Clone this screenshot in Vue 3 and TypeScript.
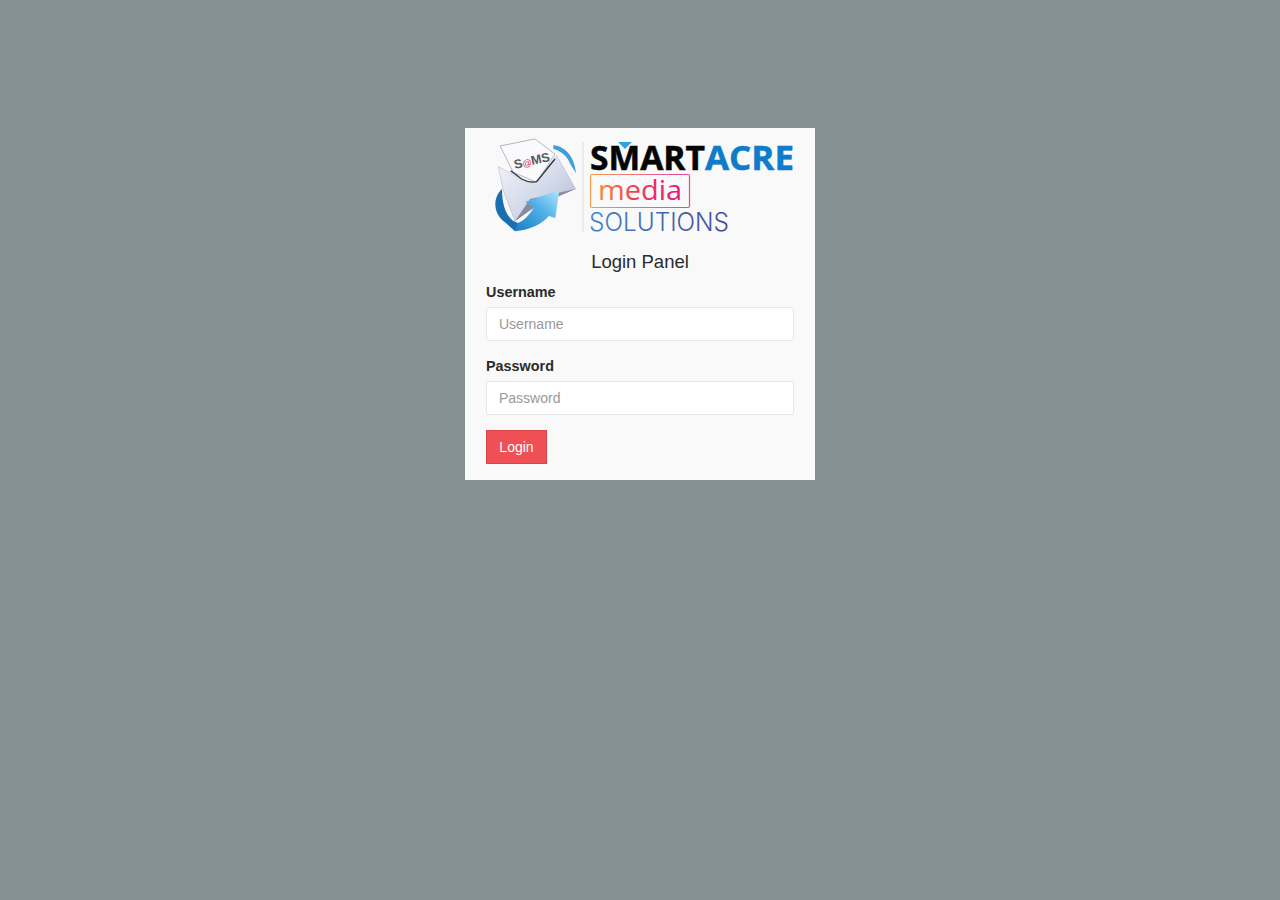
<script setup lang="ts">
import { ref } from 'vue'

const username = ref<string>('')
const password = ref<string>('')
</script>

<template>
  <main class="panel">
    <svg class="logo" viewBox="0 0 308 104" width="308" height="104" role="img" aria-label="SmartAcre Media Solutions">
      <defs>
        <linearGradient id="mediaGrad" x1="0" x2="1" y1="0" y2="0">
          <stop offset="0" stop-color="#f58a3c" />
          <stop offset="0.45" stop-color="#ee3d57" />
          <stop offset="1" stop-color="#e9127f" />
        </linearGradient>
        <linearGradient id="boxGrad" x1="0" x2="1" y1="0" y2="0">
          <stop offset="0" stop-color="#f59a52" />
          <stop offset="1" stop-color="#ef3fa0" />
        </linearGradient>
        <linearGradient id="solGrad" x1="0" x2="1" y1="0" y2="0">
          <stop offset="0" stop-color="#3f86c8" />
          <stop offset="1" stop-color="#434a97" />
        </linearGradient>
        <linearGradient id="envGrad" x1="0" x2="1" y1="0" y2="1">
          <stop offset="0" stop-color="#f4f5fa" />
          <stop offset="0.55" stop-color="#d3d9e8" />
          <stop offset="1" stop-color="#aab4cd" />
        </linearGradient>
        <linearGradient id="arrowGrad" x1="0" x2="1" y1="1" y2="0">
          <stop offset="0" stop-color="#1c7cc0" />
          <stop offset="0.55" stop-color="#4eb0e8" />
          <stop offset="1" stop-color="#b4e6fb" />
        </linearGradient>
      </defs>

      <g transform="translate(0 -2) scale(0.3333)">
        <path d="M190 33 C228 38 254 70 258 118 L242 92 C232 66 212 50 190 45 Z" fill="#3f9fd8" />
        <path d="M30 36 L135 15 L195 60 L140 145 L70 115 Z" fill="#fafafc" stroke="#8f95a6" stroke-width="2" />
        <text x="75" y="105" transform="rotate(-13 75 105)" class="sams">S<tspan fill="#e0405a" font-size="28">@</tspan>MS</text>
        <path d="M25 98 L70 122 Q105 150 135 145 L200 65 L257 165 L130 205 L75 262 L40 170 Z" fill="url(#envGrad)" stroke="#a6aec4" stroke-width="1.5" />
        <path d="M62 110 L95 135 Q120 148 140 143 L195 75" fill="none" stroke="#2f3440" stroke-width="4" />
        <path d="M75 262 L120 195 L257 165 L140 215 Z" fill="#858ca1" />
        <path d="M36 165 C8 190 8 240 45 265 L75 292 L88 268 C56 262 36 225 36 165 Z" fill="#1a6fb0" />
        <path d="M75 292 C120 288 160 268 176 246 L196 252 L208 168 L106 204 L132 220 C118 244 100 262 82 268 Z" fill="url(#arrowGrad)" />
      </g>

      <line x1="93" y1="6" x2="93" y2="96" stroke="#dcdcdc" stroke-width="1" />

      <text x="100" y="34" class="smart" textLength="115" lengthAdjust="spacingAndGlyphs">SMART</text>
      <path d="M128 6 L142 6 L135 13 Z" fill="#2ba3dc" />
      <text x="215" y="34" class="acre" textLength="89" lengthAdjust="spacingAndGlyphs">ACRE</text>

      <rect x="100.5" y="38.5" width="99" height="33" rx="1.5" fill="none" stroke="url(#boxGrad)" stroke-width="1.2" />
      <text x="108" y="64" class="media" fill="url(#mediaGrad)" textLength="84" lengthAdjust="spacingAndGlyphs">media</text>

      <text x="99" y="95" class="solutions" fill="url(#solGrad)" textLength="140" lengthAdjust="spacingAndGlyphs">SOLUTIONS</text>
    </svg>

    <h1 class="title">Login Panel</h1>

    <form class="form" @submit.prevent>
      <div class="field">
        <label for="username">Username</label>
        <input id="username" v-model="username" type="text" placeholder="Username" />
      </div>
      <div class="field">
        <label for="password">Password</label>
        <input id="password" v-model="password" type="password" placeholder="Password" />
      </div>
      <button type="submit" class="btn">Login</button>
    </form>
  </main>
</template>

<style>
html,
body {
  margin: 0;
  min-height: 100%;
  background: #839094;
}
</style>

<style scoped>
.panel {
  box-sizing: border-box;
  width: 350px;
  height: 352px;
  margin: 128px auto 0;
  padding: 8px 21px 16px;
  background: #f9f9f9;
  color: #2b2b2b;
  font-family: "Liberation Sans", Arial, sans-serif;
}

.logo {
  display: block;
  margin-left: 4px;
}

.sams {
  font-family: "Liberation Sans", sans-serif;
  font-size: 38px;
  font-weight: 700;
  fill: #55585f;
}

.smart,
.acre {
  font-family: "Open Sans", "Liberation Sans", sans-serif;
  font-size: 33.6px;
  font-weight: 700;
  stroke-width: 0.5px;
}

.smart {
  fill: #050505;
  stroke: #050505;
}

.acre {
  fill: #0f7cc9;
  stroke: #0f7cc9;
}

.media {
  font-family: "Open Sans", sans-serif;
  font-size: 28px;
  font-weight: 500;
}

.solutions {
  font-family: Inter, "Open Sans", sans-serif;
  font-size: 25px;
  font-weight: 300;
}

.title {
  margin: 12px 0 0;
  font-size: 18.5px;
  font-weight: 400;
  line-height: 20px;
  text-align: center;
}

.form {
  display: flex;
  flex-direction: column;
  align-items: flex-start;
  margin-top: 10px;
}

.field {
  display: flex;
  flex-direction: column;
  width: 100%;
  margin-bottom: 15px;
}

label {
  margin-bottom: 5px;
  font-size: 14.4px;
  font-weight: 700;
  line-height: 20px;
}

input {
  box-sizing: border-box;
  width: 100%;
  height: 34px;
  padding: 6px 12px;
  border: 1px solid #e6e6e6;
  border-radius: 3px;
  outline: none;
  background: #fff;
  color: #333;
  font-family: inherit;
  font-size: 14px;
}

input::placeholder {
  color: #999;
  opacity: 1;
}

.btn {
  box-sizing: border-box;
  width: 61px;
  height: 34px;
  padding: 0;
  border: 1px solid #d9444a;
  border-radius: 0;
  background: #ef5055;
  color: #fff;
  font-family: inherit;
  font-size: 14px;
  cursor: pointer;
}
</style>
